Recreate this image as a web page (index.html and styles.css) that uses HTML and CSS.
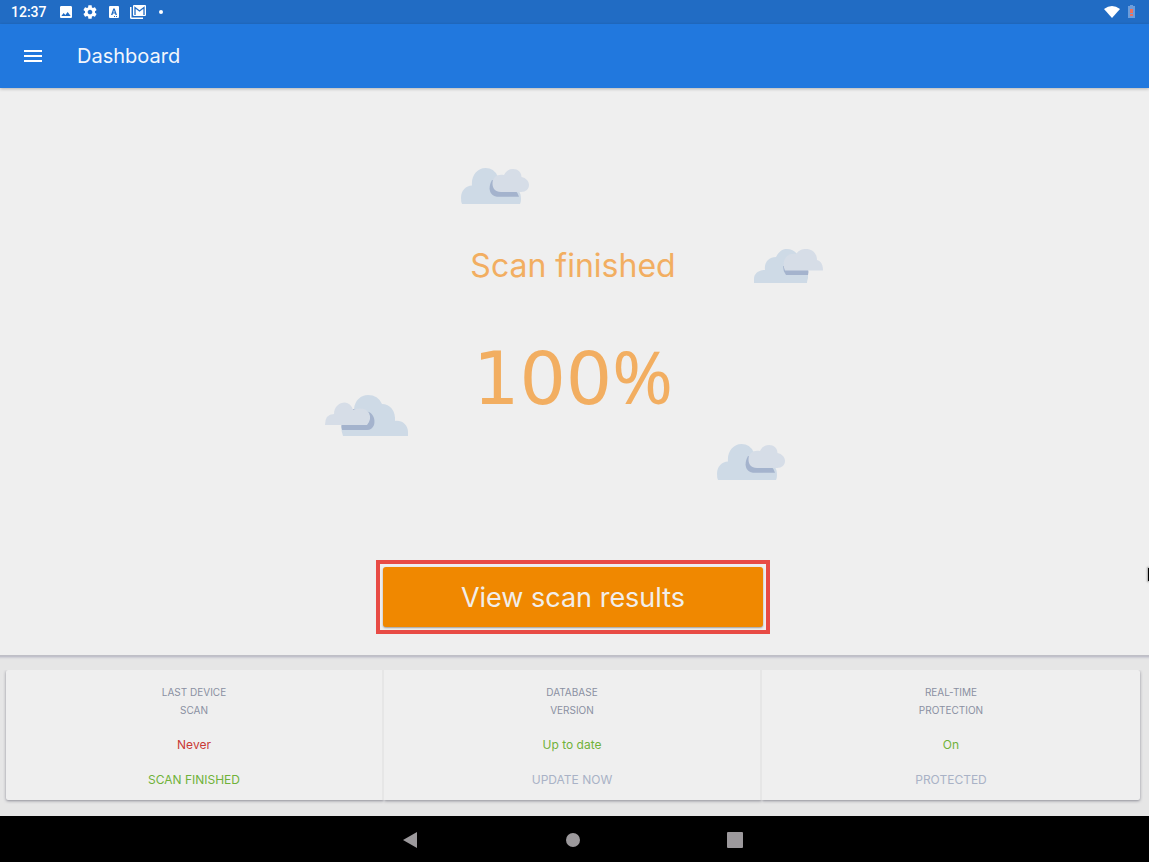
FILE: index.html
```html
<!DOCTYPE html>
<html lang="en">
<head>
<meta charset="utf-8">
<meta name="viewport" content="width=device-width, initial-scale=1">
<title>Dashboard</title>
<link rel="stylesheet" href="styles.css">
</head>
<body>
<div class="status-bar">
  <span class="clock">12:37</span>
  <svg class="status-icon" viewBox="0 0 24 24" aria-hidden="true"><path d="M21 19V5c0-1.100-.9-2-2-2H5c-1.100 0-2 .9-2 2v14c0 1.100.9 2 2 2h14c1.100 0 2-.9 2-2zM8.500 13.500l2.500 3 3.500-4.500 4.500 6H5l3.500-4.500z"/></svg>
  <svg class="status-icon" viewBox="0 0 24 24" aria-hidden="true"><path d="M19.430 12.980c.04-.32.07-.64.07-.98s-.03-.66-.07-.98l2.110-1.650c.19-.15.24-.42.12-.64l-2-3.460c-.12-.22-.39-.3-.61-.22l-2.490 1c-.52-.4-1.080-.73-1.690-.98l-.38-2.650C14.460 2.180 14.250 2 14 2h-4c-.25 0-.46.18-.49.42l-.38 2.650c-.61.25-1.170.59-1.690.98l-2.490-1c-.23-.09-.49 0-.61.22l-2 3.460c-.13.22-.07.49.12.64l2.110 1.650c-.04.32-.07.65-.07.98s.03.66.07.98l-2.110 1.650c-.19.15-.24.42-.12.64l2 3.460c.12.22.39.3.61.22l2.490-1c.52.4 1.080.73 1.690.98l.38 2.650c.03.24.24.42.49.42h4c.25 0 .46-.18.49-.42l.38-2.650c.61-.25 1.170-.59 1.690-.98l2.490 1c.23.09.49 0 .61-.22l2-3.460c.12-.22.07-.49-.12-.64l-2.110-1.650zM12 15.500c-1.930 0-3.500-1.570-3.500-3.500s1.570-3.500 3.500-3.500 3.500 1.570 3.500 3.500-1.570 3.500-3.500 3.500z"/></svg>
  <svg class="status-icon" viewBox="0 0 16 16" aria-hidden="true"><path fill-rule="evenodd" d="M4 2h8q1 0 1 1v10q0 1-1 1H4q-1 0-1-1V3q0-1 1-1zM7.300 4.500 5 11h1.500l.4-1.400h2.200l.4 1.400H11L8.700 4.500zM8 6l.7 2.500H7.300zM8 12v1h1v-1zM10 12v1h1v-1z"/></svg>
  <svg class="status-icon" viewBox="0 0 16 16" aria-hidden="true"><path d="M0 3h1.500v10.500H13V15H1.500Q0 15 0 13.500z"/><path d="M4 1h11q1 0 1 1v9q0 1-1 1H4q-1 0-1-1V2q0-1 1-1z"/><path fill="none" stroke="#216cc4" stroke-width="1.300" d="M5 11V3.500L9.500 7 14 3.500V11"/></svg>
  <span class="more-dot"></span>
  <span class="spacer"></span>
  <svg class="wifi" viewBox="0 0 16 12" aria-hidden="true"><path d="M0 3Q8-3 16 3L8 12z"/></svg>
  <svg class="battery" viewBox="0 0 7 14" aria-hidden="true"><path fill="#6c9ddb" d="M2 0h3v1h2v12H0V1h2z"/><path fill="#f0705a" d="M2 4h3v4H2zM2 9h3v2H2z"/></svg>
</div>
<header class="app-bar">
  <button class="menu-button" type="button" aria-label="Menu"><span></span><span></span><span></span></button>
  <h1>Dashboard</h1>
</header>
<main class="stage">
  <svg class="cloud cloud-top" width="68" height="36" viewBox="0 0 68 36" aria-hidden="true">
    <path fill="#cedae6" d="M1 36Q0 34 0 30C0 22 5 18 11 17.500C10 8 16 0 24.500 0Q33 0 36.500 8L57 22Q60 25 60 31Q60 34 59 36z"/>
    <path fill="#a4b3cd" d="M31 12C26 21 29 28.700 38 28.700H58Q57 25 54 22z"/>
    <path fill="#d6dde7" d="M40 24C34 24 31.500 20 31.500 15.500C31.500 9 37 5.500 43 7C45 3 48 1 52 1C57 1 60.500 4.500 60.500 9C65 10 68 13 68 17C68 21 65 24 60 24z"/>
  </svg>
  <svg class="cloud cloud-right" width="70" height="34" viewBox="0 0 70 34" aria-hidden="true">
    <path fill="#cedae6" d="M0 34V30C0 25 4 21 11 21C10 13 15 8 22 8C25 2 29 0 33 0Q39 0 43 5L54 22V29Q53 32 53 34z"/>
    <path fill="#a4b3cd" d="M29 17Q29 22 32 26H54Q55 23 54 20z"/>
    <path fill="#d6dde7" d="M31 21.500C27 13 32 3 42 5C45 1 48 0 52 0C58 0 63 4 63 11C67 12 69 16 69 21.500z"/>
  </svg>
  <svg class="cloud cloud-left" width="84" height="41" viewBox="0 0 84 41" aria-hidden="true">
    <path fill="#cedae6" d="M18 41Q16 36 16.500 31L29 14C30 5 36 0 43 0Q53 0 57 9C65 9 71 16 70 26C77 25 83 30 83 37V41z"/>
    <path fill="#a4b3cd" d="M28 14L32 15L44 17C50 20 50 27 49 30Q47 35 42 35H17Q16 32 16.500 29z"/>
    <path fill="#d6dde7" d="M0 30Q0 19 9 19C9 12 14 7.500 20 7.500Q26 8 28 15Q39 11 44 18Q47 24 42 30z"/>
  </svg>
  <svg class="cloud cloud-bottom" width="68" height="36" viewBox="0 0 68 36" aria-hidden="true">
    <path fill="#cedae6" d="M1 36Q0 34 0 30C0 22 5 18 11 17.500C10 8 16 0 24.500 0Q33 0 36.500 8L57 22Q60 25 60 31Q60 34 59 36z"/>
    <path fill="#a4b3cd" d="M31 12C26 21 29 28.700 38 28.700H58Q57 25 54 22z"/>
    <path fill="#d6dde7" d="M40 24C34 24 31.500 20 31.500 15.500C31.500 9 37 5.500 43 7C45 3 48 1 52 1C57 1 60.500 4.500 60.500 9C65 10 68 13 68 17C68 21 65 24 60 24z"/>
  </svg>
  <h2>Scan finished</h2>
  <p class="progress">100<span class="percent">%</span></p>
  <div class="highlight"><button class="results-button" type="button">View scan results</button></div>
  <span class="edge-mark"></span>
</main>
<section class="summary">
  <div class="card">
    <p class="label">LAST DEVICE<br>SCAN</p>
    <p class="value bad">Never</p>
    <button class="action good" type="button">SCAN FINISHED</button>
  </div>
  <div class="card">
    <p class="label">DATABASE<br>VERSION</p>
    <p class="value good">Up to date</p>
    <button class="action" type="button">UPDATE NOW</button>
  </div>
  <div class="card">
    <p class="label">REAL-TIME<br>PROTECTION</p>
    <p class="value good">On</p>
    <button class="action" type="button">PROTECTED</button>
  </div>
</section>
<nav class="system-nav">
  <button type="button" aria-label="Back"><svg width="16" height="16" viewBox="0 0 16 16"><path d="M0 8 14 0v16z"/></svg></button>
  <button type="button" aria-label="Home"><svg width="16" height="16" viewBox="0 0 16 16"><circle cx="8" cy="8" r="7"/></svg></button>
  <button type="button" aria-label="Overview"><svg width="16" height="16" viewBox="0 0 16 16"><rect width="16" height="16" rx="1"/></svg></button>
</nav>
</body>
</html>
```
FILE: styles.css
```css
* { box-sizing: border-box; }

body {
  margin: 0;
  min-height: 100vh;
  display: flex;
  flex-direction: column;
  background: #efefef;
  font-family: Inter, "Noto Sans", sans-serif;
  overflow-x: hidden;
}

h1, h2, p { margin: 0; font-weight: 400; }

button {
  border: 0;
  padding: 0;
  background: none;
  font: inherit;
  color: inherit;
}

.status-bar {
  display: flex;
  align-items: center;
  gap: 8px;
  height: 24px;
  padding: 0 14px 0 11px;
  background: #216cc4;
  color: #fff;
  fill: #fff;
}

.clock {
  margin-right: 3px;
  font: 500 14px/24px Roboto, sans-serif;
}

.status-icon { width: 16px; height: 16px; }

.more-dot {
  width: 4px;
  height: 4px;
  margin-left: 5px;
  border-radius: 50%;
  background: #fff;
}

.spacer { flex: 1; }
.wifi { width: 16px; height: 12px; }
.battery { width: 7px; height: 14px; }

.app-bar {
  display: flex;
  align-items: center;
  gap: 35px;
  height: 64px;
  padding: 0 24px;
  background: #2178de;
  color: #f2f6fc;
  box-shadow: 0 1px 3px rgba(0, 0, 0, .25);
  z-index: 1;
}

.app-bar h1 { font-size: 20px; line-height: 28px; }

.menu-button {
  display: flex;
  flex-direction: column;
  gap: 3px;
  width: 18px;
}

.menu-button span { height: 2px; background: #fff; }

.stage {
  position: relative;
  flex: 1;
  display: flex;
  flex-direction: column;
  align-items: center;
  padding: 156px 3px 21px 0;
}

.stage h2 {
  color: #f2ae61;
  font-size: 32px;
  line-height: 44px;
}

.progress {
  margin-top: 38px;
  color: #f2ae61;
  font: 73px/100px "DejaVu Sans", sans-serif;
}

.percent { font-family: "Noto Sans", sans-serif; }

.highlight {
  width: 394px;
  max-width: 100%;
  margin-top: auto;
  padding: 3px;
  border: 4px solid #e84b45;
}

.results-button {
  display: block;
  width: 100%;
  height: 60px;
  border-radius: 3px;
  background: #f08800;
  color: #f1eeea;
  font-size: 27px;
  box-shadow: 0 1px 2px rgba(0, 0, 0, .35);
}

.cloud { position: absolute; }
.cloud-top { left: calc(50% - 114px); top: 80px; }
.cloud-right { left: calc(50% + 179px); top: 161px; }
.cloud-left { left: calc(50% - 250px); top: 307px; }
.cloud-bottom { left: calc(50% + 142px); top: 356px; }

.edge-mark {
  position: absolute;
  right: 0;
  top: 480px;
  width: 1px;
  height: 13px;
  background: #000;
  box-shadow: 0 0 2px 1px rgba(0, 0, 0, .3);
}

.summary {
  display: grid;
  grid-template-columns: repeat(3, 1fr);
  padding: 14px 9px 16px 6px;
  border-top: 1px solid #bfbfc6;
  background: #e6e6e6;
  box-shadow: inset 0 4px 3px -3px rgba(90, 90, 130, .4);
}

.card {
  display: flex;
  flex-direction: column;
  align-items: center;
  gap: 17px;
  padding: 13px 0 11px;
  background: #efefef;
  text-align: center;
  box-shadow: 0 1px 3px rgba(50, 50, 70, .5);
  clip-path: inset(0 0 -6px 0);
}

.card:not(:last-child) { border-right: 2px solid #e6e6e6; }
.card:first-child { border-radius: 2px 0 0 2px; clip-path: inset(0 0 -6px -6px); }
.card:last-child { border-radius: 0 2px 2px 0; clip-path: inset(0 -6px -6px 0); }

.label { color: #8a90a2; font-size: 10px; line-height: 18px; }
.value { font-size: 12px; line-height: 18px; }
.action { color: #a9b2c6; font-size: 12px; line-height: 18px; }
.good { color: #70b23a; }
.bad { color: #c93a36; }

.system-nav {
  display: flex;
  justify-content: center;
  align-items: center;
  gap: 146px;
  height: 46px;
  padding: 1px 3px 0 0;
  background: #000;
  fill: #9c999c;
}

.system-nav button { display: flex; }
.system-nav svg { display: block; }
```
